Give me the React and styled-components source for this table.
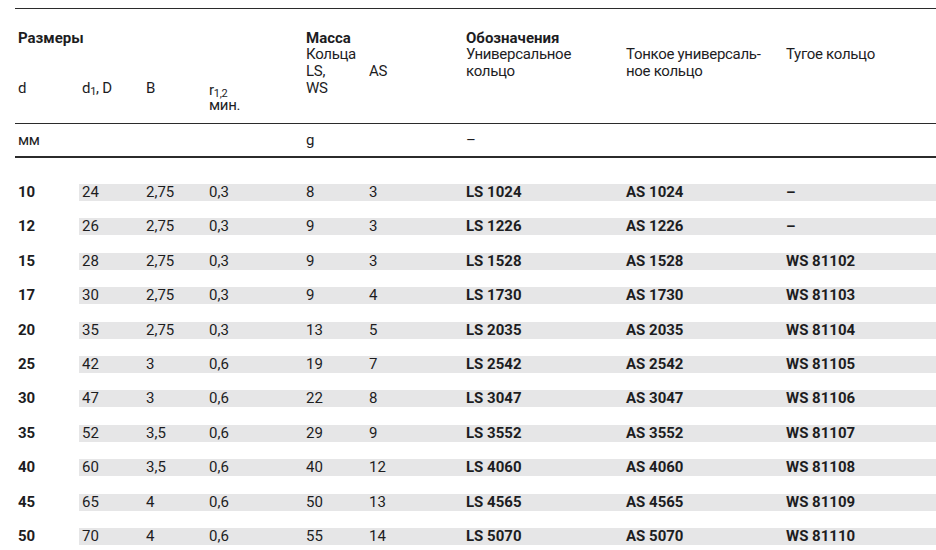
import React from "react";
import styled, { createGlobalStyle } from "styled-components";

const GlobalStyle = createGlobalStyle`
  html, body { margin: 0; padding: 0; background: #ffffff; }
  body {
    font-family: Roboto, "Noto Sans", "Liberation Sans", sans-serif;
    color: #1d1d1f;
    -webkit-font-smoothing: antialiased;
  }
`;

const COLS = "64px 64px 63px 97px 63px 97px 160px 160px 1fr";

const Page = styled.div`
  width: 936px;
  padding: 8px 0 0 15px;
  box-sizing: border-box;
`;

const Table = styled.div`
  border-top: 1px solid #2b2b2b;
  font-size: 15px;
`;

const Header = styled.div`
  display: grid;
  grid-template-columns: ${COLS};
  grid-template-rows: repeat(4, 16.7px) 15px;
  padding: 20.8px 0 11.4px;
  border-bottom: 1px solid #2b2b2b;
  line-height: 16.7px;
`;

const HeadCell = styled.div`
  grid-column: ${(p) => p.$col} / span ${(p) => p.$span || 1};
  grid-row: ${(p) => p.$row} / span ${(p) => p.$rows || 1};
  padding-left: 3px;
  font-weight: ${(p) => (p.$bold ? 700 : 400)};
  letter-spacing: ${(p) => (p.$bold ? "0" : "-0.3px")};
  line-height: 16.7px;
  white-space: nowrap;
`;

const StackCell = styled(HeadCell)`
  line-height: 15px;
  padding-top: 3px;
`;

const Sub = styled.sub`
  font-size: 11px;
  line-height: 0;
  vertical-align: -2px;
`;

const Units = styled.div`
  display: grid;
  grid-template-columns: ${COLS};
  padding: 8.4px 0 6.6px;
  line-height: 17px;
  border-bottom: 2px solid #2b2b2b;
  letter-spacing: -0.3px;
`;

const UnitCell = styled.div`
  grid-column: ${(p) => p.$col};
  padding-left: 3px;
`;

const Body = styled.div`
  display: flex;
  flex-direction: column;
  gap: 17.43px;
  padding-top: 26px;
`;

const Row = styled.div`
  display: grid;
  grid-template-columns: ${COLS};
  height: 17px;
  line-height: 17px;
`;

const Cell = styled.div`
  padding-left: 3px;
  background: ${(p) => (p.$band ? "#e6e6e7" : "transparent")};
  font-weight: ${(p) => (p.$bold ? 700 : 400)};
  white-space: nowrap;
`;

const rows = [
  ["10", "24", "2,75", "0,3", "8", "3", "LS 1024", "AS 1024", "–"],
  ["12", "26", "2,75", "0,3", "9", "3", "LS 1226", "AS 1226", "–"],
  ["15", "28", "2,75", "0,3", "9", "3", "LS 1528", "AS 1528", "WS 81102"],
  ["17", "30", "2,75", "0,3", "9", "4", "LS 1730", "AS 1730", "WS 81103"],
  ["20", "35", "2,75", "0,3", "13", "5", "LS 2035", "AS 2035", "WS 81104"],
  ["25", "42", "3", "0,6", "19", "7", "LS 2542", "AS 2542", "WS 81105"],
  ["30", "47", "3", "0,6", "22", "8", "LS 3047", "AS 3047", "WS 81106"],
  ["35", "52", "3,5", "0,6", "29", "9", "LS 3552", "AS 3552", "WS 81107"],
  ["40", "60", "3,5", "0,6", "40", "12", "LS 4060", "AS 4060", "WS 81108"],
  ["45", "65", "4", "0,6", "50", "13", "LS 4565", "AS 4565", "WS 81109"],
  ["50", "70", "4", "0,6", "55", "14", "LS 5070", "AS 5070", "WS 81110"],
];

const boldCols = new Set([0, 6, 7, 8]);

export default function App() {
  return (
    <>
      <GlobalStyle />
      <Page>
        <Table>
          <Header>
            <HeadCell $col={1} $row={1} $span={3} $bold>Размеры</HeadCell>
            <HeadCell $col={1} $row={4}>d</HeadCell>
            <HeadCell $col={2} $row={4}>
              d<Sub>1</Sub>, D
            </HeadCell>
            <HeadCell $col={3} $row={4}>B</HeadCell>
            <StackCell $col={4} $row={4} $rows={2}>
              r<Sub>1,2</Sub>
              <br />
              мин.
            </StackCell>
            <HeadCell $col={5} $row={1} $bold>Масса</HeadCell>
            <HeadCell $col={5} $row={2}>Кольца</HeadCell>
            <HeadCell $col={5} $row={3}>LS,</HeadCell>
            <HeadCell $col={5} $row={4}>WS</HeadCell>
            <HeadCell $col={6} $row={3}>AS</HeadCell>
            <HeadCell $col={7} $row={1} $bold>Обозначения</HeadCell>
            <HeadCell $col={7} $row={2}>Универсальное</HeadCell>
            <HeadCell $col={7} $row={3}>кольцо</HeadCell>
            <HeadCell $col={8} $row={2}>Тонкое универсаль-</HeadCell>
            <HeadCell $col={8} $row={3}>ное кольцо</HeadCell>
            <HeadCell $col={9} $row={2}>Тугое кольцо</HeadCell>
          </Header>
          <Units>
            <UnitCell $col={1}>мм</UnitCell>
            <UnitCell $col={5}>g</UnitCell>
            <UnitCell $col={7}>–</UnitCell>
          </Units>
          <Body>
            {rows.map((r) => (
              <Row key={r[0]}>
                {r.map((v, i) => (
                  <Cell key={i} $band={i > 0} $bold={boldCols.has(i)}>
                    {v}
                  </Cell>
                ))}
              </Row>
            ))}
          </Body>
        </Table>
      </Page>
    </>
  );
}
